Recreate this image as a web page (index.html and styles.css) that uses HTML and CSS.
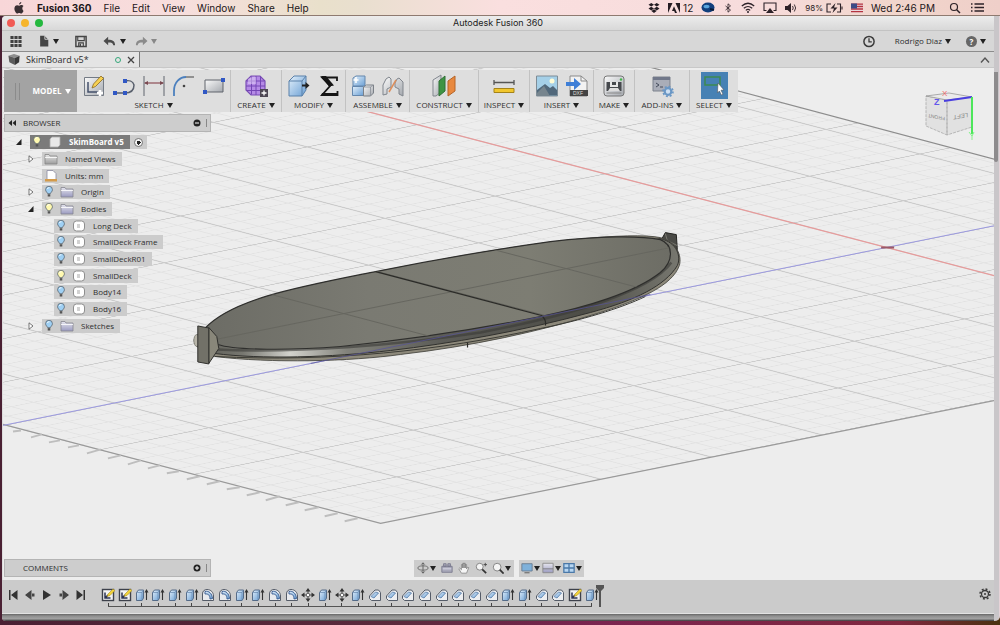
FILE: index.html
```html
<!DOCTYPE html>
<html lang="en">
<head>
<meta charset="utf-8">
<title>Autodesk Fusion 360</title>
<link rel="stylesheet" href="styles.css">
</head>
<body>
<svg class="defs" aria-hidden="true">
  <defs>
    <linearGradient id="gBlue" x1="0" y1="0" x2="1" y2="1"><stop offset="0" stop-color="#e3f0fb"/><stop offset="1" stop-color="#6a9fd4"/></linearGradient>
    <linearGradient id="gGrey" x1="0" y1="0" x2="1" y2="1"><stop offset="0" stop-color="#fafafa"/><stop offset="1" stop-color="#a4a8ae"/></linearGradient>
    <linearGradient id="gFolder" x1="0" y1="0" x2="0" y2="1"><stop offset="0" stop-color="#e6e6ee"/><stop offset="1" stop-color="#9a9ac0"/></linearGradient>
    <symbol id="t-sketch" viewBox="0 0 14 14"><rect x="1.500" y="1.500" width="11" height="11" fill="#f4f4f4" stroke="#3d414b" stroke-width="1.400"/><path d="M4 4.500V10h5.500M4 10l3-3" fill="none" stroke="#2b3354" stroke-width="1.500"/><path d="M6 8.500l1-2.500 5-5 2 1.500-5 5z" fill="#f3d43a" stroke="#927b1b" stroke-width=".5"/></symbol>
    <symbol id="t-ext" viewBox="0 0 14 14"><path d="M1.500 4.500L3.500 2h5v8L7 12.500H1.500z" fill="url(#gBlue)" stroke="#49617f" stroke-width=".9"/><path d="M1.500 4.500H7L8.500 2M7 4.500v8" fill="none" stroke="#6587ad" stroke-width=".7"/><path d="M11.500 12V3" stroke="#333" stroke-width="1.100"/><path d="M9.500 4.500l2-3.500 2 3.500z" fill="#333"/></symbol>
    <symbol id="t-fil" viewBox="0 0 14 14"><path d="M1.500 12.500V6c0-3 2-4.500 4.500-4.500 4 0 6.500 3 6.500 6.500v4.500z" fill="#e8eaee" stroke="#555c68"/><path d="M4 3.500c4-1 7 2 7.500 7L9 11C9 7 7 5.500 4 6z" fill="url(#gBlue)" stroke="#31568c" stroke-width=".9"/></symbol>
    <symbol id="t-cha" viewBox="0 0 14 14"><path d="M1.500 8L7 2h3.500l2 2.500v8h-9l-2-2z" fill="#eceef1" stroke="#555c68"/><path d="M3 8.500L7.500 4l3 1L6 10z" fill="url(#gBlue)" stroke="#567ba7" stroke-width=".8"/></symbol>
    <symbol id="t-move" viewBox="0 0 14 14"><path d="M7 0l2.500 3.500h-5zM7 14l2.500-3.500h-5zM0 7l3.500-2.500v5zM14 7l-3.500-2.500v5z" fill="#333"/><path d="M7 3v8M3 7h8" stroke="#444"/><rect x="5.700" y="5.700" width="2.600" height="2.600" fill="#fff" stroke="#444" stroke-width=".6"/></symbol>
    <symbol id="bulb" viewBox="0 0 10 14"><path d="M3.500 9C3 7.500 1 6.500 1 4.300a4 4 0 018 0C9 6.500 7 7.500 6.500 9z" fill="currentColor" stroke="#56616b" stroke-width=".9"/><path d="M3 3.500q1-2 2.500-1.500" fill="none" stroke="#fff"/><path d="M3.500 9.500h3v2.800h-3z" fill="#555"/></symbol>
    <symbol id="folder" viewBox="0 0 14 12"><path d="M1 1.500h4l1 1.500h7V11H1z" fill="url(#gFolder)" stroke="#85858f" stroke-width=".8"/><path d="M1 4.500h12" stroke="#fff" stroke-width=".8"/></symbol>
    <symbol id="body" viewBox="0 0 14 12"><rect x="1.500" y="1" width="11" height="10" rx="3" fill="#fff" stroke="#8e8e8e"/><path d="M5 4h3v4H5z" fill="#d2d2d2"/></symbol>
    <symbol id="closed" viewBox="0 0 8 8"><path d="M2 .8L6 4 2 7.200z" fill="#fff" stroke="#555" stroke-width=".8"/></symbol>
    <symbol id="open" viewBox="0 0 8 8"><path d="M6.500 1v6H1z" fill="#222"/></symbol>
  </defs>
</svg>

<header class="menubar">
  <nav class="menus" aria-label="Application menu">
    <button class="apple" aria-label="Apple"><svg viewBox="0 0 12 12"><path d="M8.300 0C8.400 1.300 7.300 2.600 6 2.600 5.900 1.300 7 .2 8.300 0zM10.500 9c-.6 1.400-1.400 2.600-2.400 2.600-.8 0-1-.5-1.900-.5s-1.200.5-1.900.5C2.900 11.600 1.400 8.900 1.400 6.600c0-2.200 1.400-3.400 2.700-3.400.9 0 1.500.5 2.200.5.600 0 1.300-.6 2.300-.6.700 0 1.400.4 1.900 1-1.700 1-1.500 3.800 0 4.900z" fill="#3a2f33"/></svg></button>
    <button class="app-name">Fusion 360</button><button>File</button><button>Edit</button><button>View</button><button>Window</button><button>Share</button><button>Help</button>
  </nav>
  <div class="status">
    <svg class="i12" viewBox="0 0 12 12"><path d="M3.300 1L6 2.800 3.200 4.600.5 2.800zM8.700 1l2.800 1.800-2.700 1.800L6 2.800zM3.200 4.800L6 6.600 3.300 8.400.5 6.600zM8.800 4.800l2.700 1.800-2.800 1.800L6 6.600zM3.400 9L6 7.300 8.600 9 6 11z" fill="#231c22"/></svg>
    <span class="pair"><svg class="i12" viewBox="0 0 12 12"><path d="M0 1h4.500L0 11zM7.500 1H12v10zM6 4.300L9 11H7L6.200 9H4z" fill="#231c22"/></svg>12</span>
    <svg class="i14" viewBox="0 0 14 12"><ellipse cx="7" cy="6" rx="6.500" ry="5" fill="#123f7d"/><ellipse cx="5.500" cy="5" rx="3" ry="1.800" fill="#5aa5dd"/><path d="M9 7.500l4 1" stroke="#061a3a" stroke-width="2"/></svg>
    <svg class="i10" viewBox="0 0 10 12"><path d="M2 3.500l6 5L5 11V1l3 2.500-6 5" fill="none" stroke="#2c2228"/></svg>
    <svg class="i14" viewBox="0 0 14 12"><path d="M.8 4.500q6.200-5.500 12.400 0M2.800 6.800q4.200-3.600 8.400 0M4.800 8.900q2.200-1.900 4.400 0" fill="none" stroke="#2c2228" stroke-width="1.200"/><circle cx="7" cy="10.600" r="1" fill="#2c2228"/></svg>
    <svg class="i14" viewBox="0 0 14 12"><path d="M3.500 9H1V1.500h12V9h-2.500" fill="none" stroke="#2c2228" stroke-width="1.100"/><path d="M7 6.500l4 5H3z" fill="#2c2228"/></svg>
    <svg class="i12" viewBox="0 0 12 12"><path d="M0 4h2.500L6 1v10L2.500 8H0z" fill="#2c2228"/><path d="M7.500 4q1.500 2 0 4M9.300 2.500q2.700 3.500 0 7" fill="none" stroke="#2c2228" stroke-width=".9"/></svg>
    <span class="pair small">98%<svg class="batt" viewBox="0 0 17 10"><path d="M5 1H1v8h4M11 1h3.500v8H11M16 3.500v3" fill="none" stroke="#2c2228" stroke-width="1.100"/><path d="M9.500 0L4.500 5.500H8L6.500 10l5-5.500H8z" fill="#2c2228"/></svg></span>
    <svg class="i12" viewBox="0 0 12 9"><path d="M0 0h12v9H0z" fill="#e9d9de"/><path d="M0 .6h12M0 3h12M0 5.500h12M0 8.200h12" stroke="#b5333f" stroke-width="1.300"/><path d="M0 0h6v5H0z" fill="#3b4b86"/></svg>
    <span>Wed 2:46 PM</span>
    <button class="search" aria-label="Search"><svg class="i12" viewBox="0 0 12 12"><circle cx="5" cy="5" r="3.500" fill="none" stroke="#2c2228" stroke-width="1.200"/><path d="M7.700 7.700L11 11" stroke="#2c2228" stroke-width="1.500"/></svg></button>
    <button aria-label="Notifications"><svg class="i14" viewBox="0 0 14 12"><path d="M0 2.500h1.500M0 6h1.500M0 9.500h1.500M3.500 2.500H13M3.500 6H13M3.500 9.500H13" stroke="#2c2228" stroke-width="1.300"/></svg></button>
  </div>
</header>

<div class="window">
  <main class="app">
    <div class="titlebar">
      <div class="lights"><i class="red"></i><i class="yellow"></i><i class="green"></i></div>
      <h1>Autodesk Fusion 360</h1>
    </div>
    <div class="quickbar">
      <div class="quick">
        <button aria-label="Data panel"><svg class="i14" viewBox="0 0 14 14"><path d="M1 1h3.400v3.400H1zM5.300 1h3.400v3.400H5.300zM9.600 1H13v3.400H9.600zM1 5.300h3.400v3.400H1zM5.300 5.300h3.400v3.400H5.300zM9.600 5.300H13v3.400H9.600zM1 9.600h3.400V13H1zM5.300 9.600h3.400V13H5.300zM9.600 9.600H13V13H9.600z" fill="#414141"/></svg></button>
        <button class="drop" aria-label="File"><svg class="i12" viewBox="0 0 12 14"><path d="M1.500 1h5l4.500 4.500v8H1.500z" fill="#444"/><path d="M7 1v4h4" fill="none" stroke="#dadada"/></svg></button>
        <button aria-label="Save"><svg class="i14" viewBox="0 0 14 14"><path d="M1.500 1.500h11v11h-11z" fill="none" stroke="#454545" stroke-width="1.600"/><path d="M3.500 2v4h7V2M4.500 12V8.500h5V12" fill="none" stroke="#454545" stroke-width="1.200"/><path d="M5.500 9.500h1.500V13H5.500z" fill="#454545"/></svg></button>
        <button class="drop" aria-label="Undo"><svg class="i14" viewBox="0 0 14 14"><path d="M5 2v3c5 0 7.500 1.500 7.500 6h-2C10 8.500 9 8 5 8v3L0 6.500z" fill="#4b4b4b"/></svg></button>
        <button class="drop faded" aria-label="Redo"><svg class="i14" viewBox="0 0 14 14"><path d="M9 2v3C4 5 1.500 6.500 1.500 11h2C4 8.500 5 8 9 8v3l5-4.500z" fill="#8b8b8b"/></svg></button>
      </div>
      <div class="account">
        <button aria-label="Job status"><svg class="i14" viewBox="0 0 14 14"><circle cx="7" cy="7" r="5.500" fill="none" stroke="#3b3b3b" stroke-width="1.600"/><path d="M7 3.500V7.500h3" fill="none" stroke="#3b3b3b" stroke-width="1.400"/></svg></button>
        <button class="drop">Rodrigo Diaz</button>
        <button class="drop help" aria-label="Help"><b>?</b></button>
      </div>
    </div>
    <div class="tabs">
      <div class="tab">
        <svg class="i14" viewBox="0 0 14 14"><path d="M1 3l6-2 6 2-5 2.500z" fill="#8d8d8d"/><path d="M1 3l7 2.500V13L2 10z" fill="#5b5b5b"/><path d="M8 5.500L13 3l-.5 7L8 13z" fill="#383838"/></svg>
        <span>SkimBoard v5*</span><i class="sync"></i>
        <button aria-label="Close tab"><svg class="i8" viewBox="0 0 8 8"><path d="M1 1l6 6M7 1L1 7" stroke="#444" stroke-width="1.300"/></svg></button>
      </div>
      <button aria-label="Collapse"><svg class="i10" viewBox="0 0 10 8"><path d="M1 6.500l4-4.500 4 4.500" fill="none" stroke="#555" stroke-width="1.400"/></svg></button>
    </div>

    <section class="viewport">
      <svg class="scene" viewBox="2 67 992 513" preserveAspectRatio="xMidYMid slice" role="img" aria-label="Skim board model">
        <defs>
          <pattern id="grid" width="100" height="100" patternUnits="userSpaceOnUse" patternTransform="matrix(.94 .246 1.104 -.2225 887 247)">
            <path d="M20 0V100M40 0V100M60 0V100M80 0V100" stroke="#e1e1e1" stroke-width="1.500"/>
            <path d="M0 20H100M0 40H100M0 60H100M0 80H100" stroke="#e3e3e3" stroke-width="1.800"/>
            <path d="M0 0V100M100 0V100" stroke="#cbcbcb" stroke-width="2"/>
            <path d="M0 0H100M0 100H100" stroke="#cbcbcb" stroke-width="2.400"/>
          </pattern>
          <linearGradient id="deck" x1="0" y1="0" x2="1" y2="0"><stop offset="0" stop-color="#6c6c65"/><stop offset=".35" stop-color="#7a7a72"/><stop offset=".7" stop-color="#7d7d73"/><stop offset="1" stop-color="#6d6d65"/></linearGradient>
          <linearGradient id="rail" x1="0" y1="0" x2="1" y2="0"><stop offset="0" stop-color="#5e5e57"/><stop offset=".08" stop-color="#777770"/><stop offset=".18" stop-color="#d2d2cc"/><stop offset=".3" stop-color="#82827b"/><stop offset=".5" stop-color="#5c5c57"/><stop offset=".8" stop-color="#4d4d47"/><stop offset="1" stop-color="#77776f"/></linearGradient>
          <clipPath id="deckClip"><path d="M204 328C232 298 300 286 375 271C430 260 500 248 550 241C600 235 640 235 660 239C673 244 674 260 660 272C635 292 585 307 540 316C470 330 400 340 340 346C290 350 235 350 217 344C206 340 201 334 204 328z"/></clipPath>
        </defs>
        <path d="M2 60H626L737 90L1000 161V399L380 523L4 425L2 424z" fill="url(#grid)"/>
        <path d="M626 60L737 90L1000 160" fill="none" stroke="#8d8d8d" stroke-width="1.200"/>
        <path d="M2 424L380 523L1000 399" fill="none" stroke="#9a9a9a" stroke-width="1.200"/>
        <path d="M12 431l8-1M30 437l11-3M48 442l11-2M67 447l11-2M86 453l14-4M107 458l13-3M127 464l13-4M147 468l12-3M166 473l12-2M186 479l13-3M206 484l13-3M226 489l13-2M246 495l13-3M265 500l14-4M285 505l13-3M304 510l14-3M324 516l13-3M344 521l13-3" stroke="#bebebe" stroke-width="2"/>
        <path d="M220 72.400L1000 276.600" fill="none" stroke="#e89b9b" stroke-width="1.200"/>
        <path d="M2 425L1000 224" stroke="#9c9ae0"/>
        <path d="M881 247h13" stroke="#9a5968" stroke-width="2"/>
        <path d="M660 241l5-9 11 2 1 15z" fill="#4a4a46" stroke="#252522"/>
        <path d="M665 233l2 7 10 5M667 240l-5 1" fill="none" stroke="#77776f"/>
        <path d="M204 328C300 275 600 225 660 237C676 241 682 255 679 265C672 285 640 299 600 312C540 331 470 346 400 354C350 361 270 363 214 356L196 346Q190 339 197 334z" fill="#8d897b" stroke="#3c3c36" stroke-width=".8"/>
        <path d="M204 328L660 238C677 242 681 256 677 265C665 285 635 300 590 312C520 331 450 343 390 350C330 357 260 359 214 353z" fill="url(#rail)" stroke="#31312e"/>
        <path d="M216 349C300 353 400 344 480 332C570 315 650 291 671 262" fill="none" stroke="#3b3b37" stroke-width="2.500" opacity=".6"/>
        <path d="M214 356C330 362 440 350 540 328C580 320 620 308 645 296" fill="none" stroke="#3b3b35"/>
        <path d="M204 328C232 298 300 286 375 271C430 260 500 248 550 241C600 235 640 235 660 239C673 244 674 260 660 272C635 292 585 307 540 316C470 330 400 340 340 346C290 350 235 350 217 344C206 340 201 334 204 328z" fill="url(#deck)" stroke="#2f2f2d" stroke-width="1.200"/>
        <g clip-path="url(#deckClip)"><path d="M200 342L690 243M270 243L560 319M390 222L680 298M210 278L430 336" fill="none" stroke="#66665f" stroke-width="1"/></g>
        <path d="M375 271L541 315q5 4 4 10M467 342v5" fill="none" stroke="#2b2b28" stroke-width="1.200"/>
        <path d="M310 363L650 294" stroke="#56539a" opacity=".7"/>
        <ellipse cx="196" cy="340" rx="3" ry="6" fill="#b8b5a9" stroke="#66665e" stroke-width=".6"/>
        <path d="M208 327L216 336 218 348 208 363z" fill="#89877a" stroke="#30302d"/>
        <path d="M197 325.500L208 327.500V363.500L197 361.500z" fill="#727168" stroke="#30302d"/>
      </svg>

      <svg class="cube" viewBox="0 0 60 60" role="img" aria-label="View cube">
        <path d="M6 14L27 18V53L6 44zM27 18L52 15V45L27 53z" fill="#e1e1e1" stroke="#aaa" stroke-width=".8" stroke-dasharray="3 1"/>
        <path d="M6 14L29 11 52 15 27 18z" fill="#ebebeb" stroke="#999" stroke-width=".8"/>
        <text class="face front" transform="matrix(-1 -.2 0 -1 25 35)">FRONT</text>
        <text class="face" transform="matrix(-1 .15 0 -1 48 31)">LEFT</text>
        <path d="M24 19L52 15" stroke="#4a3fe0" stroke-width="2"/><path d="M52 15V52" stroke="#4de65b" stroke-width="2"/>
        <path d="M49 50l3 4 2-4M52 53v5" fill="none" stroke="#83f38a"/>
        <text class="ax-z" x="14" y="23">Z</text><text class="ax-x" x="22" y="14">X</text>
      </svg>

      <div class="ribbon">
        <button class="workspace"><span class="drop-light">MODEL</span></button>
        <div class="group g-sketch">
          <div class="tools">
            <button aria-label="Create sketch"><svg viewBox="0 0 24 24"><path d="M2.500 3.500h19v18h-19z" fill="url(#gGrey)" stroke="#747b85"/><path d="M6 8v10h10" fill="none" stroke="#44506b" stroke-width="1.500"/><path d="M10 14l1.500-4L19 2l2.500 2.500-8 8z" fill="#f6d051" stroke="#8b6a20" stroke-width=".8"/><path d="M18 16v6M15 19h6" stroke="#fff" stroke-width="2.500"/></svg></button>
            <button aria-label="Line"><svg viewBox="0 0 24 24"><path d="M2 19h11M13 7c4-1 8 0 9 4 0 5-3 8-9 8" fill="none" stroke="#59606d" stroke-width="1.500"/><path d="M1 17h4v4H1zM11 5h4v4h-4zM11 17h4v4h-4z" fill="#3158c4"/></svg></button>
            <button aria-label="Sketch dimension"><svg viewBox="0 0 24 24"><path d="M2 2v20M22 2v20" stroke="#7d8188" stroke-width="1.300"/><path d="M3 9h18" stroke="#9c6a71" stroke-width="1.300"/><path d="M2 9l4-2v4zM22 9l-4-2v4z" fill="#7a4a52"/></svg></button>
            <button aria-label="Fillet"><svg viewBox="0 0 24 24"><path d="M2 22v-5C2 8 8 3 14 3" fill="none" stroke="#4c80be" stroke-width="1.800"/><path d="M14 3h8" stroke="#777" stroke-width="1.300"/><circle cx="12" cy="12" r="1.300" fill="#444"/></svg></button>
            <button aria-label="Rectangle"><svg viewBox="0 0 24 24"><path d="M3 6h18v12H3z" fill="url(#gGrey)" stroke="#60656d"/><path d="M19 4h4v4h-4zM1 16h4v4H1z" fill="#3158c4"/></svg></button>
          </div>
          <button class="label drop">SKETCH</button>
        </div>
        <div class="group g-create">
          <div class="tools"><button aria-label="Create form"><svg viewBox="0 0 24 24"><path d="M2 7l5-5h9l5 5v10l-5 4H7l-5-5z" fill="#b58be6" stroke="#7a4fb4" stroke-width="1.200"/><path d="M2 12h19M2.500 7h18M7.500 2.500v18M12 2v19M16.500 2.500v18M2.500 16.500H21" stroke="#7446b5"/><path d="M4 5q5-3 8-2v7H4z" fill="#e6d5fa" opacity=".5"/><path d="M16 15h8v8h-8z" fill="#4c4652"/><path d="M20 16.500v5M17.500 19h5" stroke="#fff" stroke-width="1.300"/></svg></button></div>
          <button class="label drop">CREATE</button>
        </div>
        <div class="group g-modify">
          <div class="tools">
            <button aria-label="Press pull"><svg viewBox="0 0 24 24"><path d="M2 7l5-5h12v14l-4 6H2z" fill="url(#gBlue)" stroke="#5b81aa"/><path d="M2 7h13l4-5M15 7v15" fill="none" stroke="#5b81aa"/><path d="M15 11.500h5" stroke="#222" stroke-width="2"/><path d="M18.500 8l4 3.500-4 3.500z" fill="#222"/></svg></button>
            <button aria-label="Change parameters"><svg viewBox="0 0 24 24"><path d="M20 7V3.500H5l8 8.500-8 9h15.500V17" fill="none" stroke="#151515" stroke-width="1.800"/><path d="M4 2h5l8 9.500-5 1z" fill="#151515"/><path d="M5 19h15v3H4z" fill="#151515"/></svg></button>
          </div>
          <button class="label drop">MODIFY</button>
        </div>
        <div class="group g-assemble">
          <div class="tools">
            <button aria-label="New component"><svg viewBox="0 0 24 24"><path d="M2 4l3-2h9v10H2z" fill="url(#gBlue)" stroke="#6487ad"/><path d="M1.500 12.500h11v9h-11z" fill="url(#gBlue)" stroke="#6487ad"/><path d="M12.500 13l3-2h7v8l-3 3h-7z" fill="url(#gGrey)" stroke="#7b8087"/><path d="M12.500 13h7l3-2M19.500 13v9" fill="none" stroke="#8b9098" stroke-width=".8"/><path d="M5 3v6M2.500 6h5" stroke="#fff" stroke-width="1.500"/></svg></button>
            <button aria-label="Joint"><svg viewBox="0 0 24 24"><path d="M2 11l3-6 3-2 2 2v8l-4 2v5l-4 1zM14 9l2-4 2-1 4 4v14l-4-2v-5l-4-2z" fill="url(#gGrey)" stroke="#81868d"/><path d="M8 18l7-12" stroke="#dc8e5c" stroke-width="1.500"/></svg></button>
          </div>
          <button class="label drop">ASSEMBLE</button>
        </div>
        <div class="group g-construct">
          <div class="tools"><button aria-label="Offset plane"><svg viewBox="0 0 24 24"><path d="M1 6l8-5v17l-5 4H1z" fill="url(#gGrey)" stroke="#81868d"/><path d="M7 7l6-5v15l-6 5z" fill="#3f9444" stroke="#2f7035"/><path d="M16 7l7-5v15l-7 5z" fill="#e8893f" stroke="#b56428"/></svg></button></div>
          <button class="label drop">CONSTRUCT</button>
        </div>
        <div class="group g-inspect">
          <div class="tools"><button aria-label="Measure"><svg viewBox="0 0 24 24"><path d="M2 6v5M22 6v5M2 8.500h20" stroke="#555" stroke-width="1.300"/><path d="M2 14.500h20v4H2z" fill="#f1c62d" stroke="#a4831a"/></svg></button></div>
          <button class="label drop">INSPECT</button>
        </div>
        <div class="group g-insert">
          <div class="tools">
            <button aria-label="Decal"><svg viewBox="0 0 24 24"><path d="M1.500 2h21v20h-21z" fill="#a5d0e8" stroke="#7e8c96"/><path d="M2 16l8-6 5 4 3-2 4 4v5.500H2z" fill="#51687b"/><path d="M2 19l7-7 6 10H2z" fill="#77858e"/><circle cx="17" cy="7" r="2.500" fill="#fffcd7"/></svg></button>
            <button aria-label="Insert DXF"><svg viewBox="0 0 24 24"><path d="M5 2h11l6 5v15H5z" fill="#f2f2f2" stroke="#8a8a8a"/><path d="M16 2v5h6" fill="none" stroke="#8a8a8a"/><path d="M5 16h18v6H5z" fill="#444"/><path d="M1 8h8V4l7 6-7 6v-4H1z" fill="#3f7fd7"/><text class="dxf" x="8" y="21">DXF</text></svg></button>
          </div>
          <button class="label drop">INSERT</button>
        </div>
        <div class="group g-make">
          <div class="tools"><button aria-label="3D print"><svg viewBox="0 0 24 24"><rect x="2" y="2" width="20" height="20" rx="3" fill="url(#gGrey)" stroke="#777"/><path d="M4.500 8h15v9h-15z" fill="#46494d"/><path d="M6 17l2-3h8l2 3z" fill="#ddd"/><path d="M8 8h2v3h4V8h2v5H8z" fill="#e6e6e6"/><path d="M4.500 19h15" stroke="#888"/><circle cx="19" cy="5.500" r="1.200" fill="#43b54b"/></svg></button></div>
          <button class="label drop">MAKE</button>
        </div>
        <div class="group g-addins">
          <div class="tools"><button aria-label="Scripts and add-ins"><svg viewBox="0 0 24 24"><path d="M3 3h17v14H3z" fill="#a9adb8" stroke="#7d828d"/><path d="M3 3h17v3H3z" fill="#71788a"/><path d="M6 9l3 2-3 2M10 13h3" fill="none" stroke="#444b5b"/><circle cx="18" cy="17.500" r="3.300" fill="#cfe0f2" stroke="#6a97c5" stroke-width="2.200"/><circle cx="18" cy="17.500" r="5" fill="none" stroke="#6a97c5" stroke-width="1.600" stroke-dasharray="2 1.900"/></svg></button></div>
          <button class="label drop">ADD-INS</button>
        </div>
        <div class="group g-select">
          <div class="tools"><button class="active" aria-label="Select"><svg viewBox="0 0 27 27"><path d="M4 5h15v8H4z" fill="none" stroke="#3d8a50" stroke-width="1.500"/><path d="M17 11l6 7-3 .2 2 4-1.700.8-1.900-4-2 2z" fill="#fff" stroke="#4e5560" stroke-width=".6"/></svg></button></div>
          <button class="label drop">SELECT</button>
        </div>
      </div>

      <div class="panel">
        <svg class="i8" viewBox="0 0 8 8"><path d="M4 1v6L.5 4zM8 1v6L4.500 4z" fill="#222"/></svg>
        <h2>BROWSER</h2>
        <button aria-label="Collapse browser"><svg class="i8" viewBox="0 0 8 8"><circle cx="4" cy="4" r="3.500" fill="#222"/><path d="M2 4h4" stroke="#fff"/></svg></button><i class="grip"></i>
      </div>
      <ul class="tree">
        <li class="root"><svg class="tw"><use href="#open"/></svg><span class="node strong"><svg class="bulb on"><use href="#bulb"/></svg><svg class="ico" viewBox="0 0 14 12"><path d="M2 3l2-2h8v8l-2 2H2z" fill="#e8e8e8" stroke="#aaa" stroke-width=".8"/></svg><span>SkimBoard v5</span></span><label class="radio"><input type="radio" checked aria-label="Activate SkimBoard v5"></label></li>
        <li class="l1"><svg class="tw"><use href="#closed"/></svg><span class="node"><svg class="ico grey"><use href="#folder"/></svg><span>Named Views</span></span></li>
        <li class="l1"><i class="tw"></i><span class="node"><svg class="ico" viewBox="0 0 14 12"><path d="M3 .5h6l3 3V10H3z" fill="#fff" stroke="#8a8aa0" stroke-width=".8"/><path d="M1 9h12v2.500H1z" fill="#d49b4a"/></svg><span>Units: mm</span></span></li>
        <li class="l1"><svg class="tw"><use href="#closed"/></svg><span class="node"><svg class="bulb"><use href="#bulb"/></svg><svg class="ico"><use href="#folder"/></svg><span>Origin</span></span></li>
        <li class="l1"><svg class="tw"><use href="#open"/></svg><span class="node"><svg class="bulb on"><use href="#bulb"/></svg><svg class="ico"><use href="#folder"/></svg><span>Bodies</span></span></li>
        <li class="l2"><span class="node"><svg class="bulb"><use href="#bulb"/></svg><svg class="ico"><use href="#body"/></svg><span>Long Deck</span></span></li>
        <li class="l2"><span class="node"><svg class="bulb"><use href="#bulb"/></svg><svg class="ico"><use href="#body"/></svg><span>SmallDeck Frame</span></span></li>
        <li class="l2"><span class="node"><svg class="bulb"><use href="#bulb"/></svg><svg class="ico"><use href="#body"/></svg><span>SmallDeckR01</span></span></li>
        <li class="l2"><span class="node"><svg class="bulb on"><use href="#bulb"/></svg><svg class="ico"><use href="#body"/></svg><span>SmallDeck</span></span></li>
        <li class="l2"><span class="node"><svg class="bulb"><use href="#bulb"/></svg><svg class="ico"><use href="#body"/></svg><span>Body14</span></span></li>
        <li class="l2"><span class="node"><svg class="bulb"><use href="#bulb"/></svg><svg class="ico"><use href="#body"/></svg><span>Body16</span></span></li>
        <li class="l1"><svg class="tw"><use href="#closed"/></svg><span class="node"><svg class="bulb"><use href="#bulb"/></svg><svg class="ico"><use href="#folder"/></svg><span>Sketches</span></span></li>
      </ul>

      <div class="dock">
        <div class="panel comments"><h2>COMMENTS</h2>
          <button aria-label="Expand comments"><svg class="i8" viewBox="0 0 8 8"><circle cx="4" cy="4" r="3.500" fill="#222"/><path d="M2 4h4M4 2v4" stroke="#fff"/></svg></button><i class="grip"></i></div>
        <div class="nav">
          <div class="navset">
            <button class="drop" aria-label="Orbit"><svg class="i12" viewBox="0 0 14 14"><path d="M7 1v12M5 3l2-2 2 2M5 11l2 2 2-2" fill="none" stroke="#555"/><ellipse cx="7" cy="7" rx="6" ry="2.500" fill="none" stroke="#666"/></svg></button>
            <button aria-label="Look at"><svg class="i12" viewBox="0 0 14 14"><path d="M1 5h12v7H1zM3 2h3v3H3zM8 2h3v3H8z" fill="#a9a9ba" stroke="#77778b"/><path d="M2 8h10" stroke="#e1e1ec"/></svg></button>
            <button aria-label="Pan"><svg class="i12" viewBox="0 0 14 14"><path d="M4 13L1 8l1-1 2 2V3h1.500v4V1.500H7V7 1.500h1.500V7 3H10v5l1-2 1.500.5L10 13z" fill="#f5f5f5" stroke="#666" stroke-width=".7"/></svg></button>
            <button aria-label="Zoom"><svg class="i12" viewBox="0 0 14 14"><circle cx="5.500" cy="5.500" r="4" fill="#f5f5f5" stroke="#777"/><path d="M8.500 8.500L13 13" stroke="#333" stroke-width="2"/><path d="M12 1v4M10 3h4" stroke="#444"/></svg></button>
            <button class="drop" aria-label="Fit"><svg class="i12" viewBox="0 0 14 14"><circle cx="6" cy="6" r="4.500" fill="#f5f5f5" stroke="#777"/><path d="M9 9l4.500 4.500" stroke="#333" stroke-width="2"/></svg></button>
          </div>
          <div class="navset">
            <button class="drop" aria-label="Display settings"><svg class="i12" viewBox="0 0 14 14"><path d="M1 2h12v8.500H1z" fill="#7fb1da" stroke="#66798c"/><path d="M4 12.500h6" stroke="#777" stroke-width="1.500"/></svg></button>
            <button class="drop" aria-label="Grid and snaps"><svg class="i12" viewBox="0 0 14 14"><path d="M1 1.500h12v11H1z" fill="url(#gFolder)" stroke="#888"/><path d="M1 8h12" stroke="#777"/></svg></button>
            <button class="drop" aria-label="Viewports"><svg class="i12" viewBox="0 0 14 14"><path d="M1 2h12v10H1z" fill="#b7d6f2" stroke="#4a78a8" stroke-width="1.500"/><path d="M7 2v10M1 7h12" stroke="#4a78a8" stroke-width="1.500"/></svg></button>
          </div>
        </div>
      </div>
    </section>

    <footer class="timeline">
      <div class="play">
        <button aria-label="Go to start"><svg class="i10" viewBox="0 0 10 10"><path d="M1 0h1.500v10H1zM9.500 0v10L3 5z" fill="#333"/></svg></button>
        <button aria-label="Step back"><svg class="i10" viewBox="0 0 10 10"><path d="M6.500 0v10L0 5zM7 3.500h2.500v3H7z" fill="#444"/></svg></button>
        <button aria-label="Play"><svg class="i10" viewBox="0 0 10 10"><path d="M1 0v10l8-5z" fill="#333"/></svg></button>
        <button aria-label="Step forward"><svg class="i10" viewBox="0 0 10 10"><path d="M3.500 0v10L10 5zM.5 3.500H3v3H.5z" fill="#444"/></svg></button>
        <button aria-label="Go to end"><svg class="i10" viewBox="0 0 10 10"><path d="M7.500 0H9v10H7.500zM.5 0v10L7 5z" fill="#333"/></svg></button>
      </div>
      <div class="track" id="track"></div>
      <svg class="marker" viewBox="0 0 10 24"><path d="M1 1h8v3L6 7v16H4V7L1 4z" fill="#555"/></svg>
      <button class="settings" aria-label="Timeline settings"><svg class="i12" viewBox="0 0 12 12"><circle cx="6" cy="6" r="3.500" fill="none" stroke="#3a3a3a" stroke-width="1.300"/><circle cx="6" cy="6" r="5" fill="none" stroke="#3a3a3a" stroke-width="1.500" stroke-dasharray="1.960 1.960"/><circle cx="6" cy="6" r="1" fill="#3a3a3a"/></svg></button>
    </footer>
    <div class="edge"></div>
  </main>
  <div class="gutter"><i></i></div>
</div>
<script src="timeline.js"></script>
</body>
</html>
```

FILE: styles.css
```css
* { box-sizing: border-box; }
html, body { height: 100%; margin: 0; }
body {
  display: flex;
  flex-direction: column;
  overflow: hidden;
  padding-bottom: 4px;
  background: linear-gradient(90deg, #4a2033, #5b2a3c 40%, #7b2450 60%, #80283f 90%, #4a3210);
  font-family: "Open Sans", "Noto Sans", sans-serif;
  font-size: 8px;
  line-height: 12px;
  color: #2e2e2e;
}
button {
  display: inline-flex;
  align-items: center;
  justify-content: center;
  border: 0;
  padding: 0;
  margin: 0;
  background: none;
  font: inherit;
  color: inherit;
}
svg { display: block; flex: none; }
h1, h2, ul { margin: 0; padding: 0; font: inherit; }
.defs { position: absolute; width: 0; height: 0; }
.i8 { width: 8px; height: 8px; }
.i10 { width: 10px; height: 10px; }
.i12 { width: 12px; height: 12px; }
.i14 { width: 14px; height: 13px; }
.drop::after {
  content: "";
  margin-left: 3px;
  border: 3px solid transparent;
  border-top: 5px solid #222;
  border-bottom: 0;
}

/* system menu bar */
.menubar {
  display: flex;
  flex: none;
  align-items: center;
  justify-content: space-between;
  height: 16px;
  padding: 0 15px 0 13px;
  background: linear-gradient(90deg, #f8d6d8, #f7dedd 18%, #e9e0cb 32%, #e9dfcf 36%, #fadfdf 50%, #f7dcdc 75%, #f1d5cb 90%, #efcfc9);
  border-bottom: 1px solid #8e7a70;
  font-family: Inter, "Open Sans", sans-serif;
  font-size: 10px;
  color: #1d171a;
}
.menus { display: flex; gap: 12px; }
.apple svg { width: 12px; height: 12px; }
.app-name { font-weight: 700; }
.status { display: flex; align-items: center; gap: 8px; }
.pair { display: flex; align-items: center; gap: 3px; }
.small { font-size: 8px; }
.batt { width: 17px; height: 10px; }
.search { margin: 0 2px 0 6px; }

/* window frame */
.window { display: flex; flex: 1; min-height: 0; margin-left: 2px; }
.app { display: flex; flex: 1; flex-direction: column; min-width: 0; background: #d7d7d7; border-radius: 4px 0 0 4px; overflow: hidden; }
.gutter { display: flex; flex: none; flex-direction: column; width: 6px; padding: 56px 1px 0 0; background: #c9c6c9; border-right: 1px solid #e6d3d8; border-radius: 0 0 5px 0; }
.gutter i { height: 90px; background: #8d8b8d; border-radius: 0 0 3px 3px; }
.titlebar { display: grid; grid-template-columns: 1fr auto 1fr; align-items: center; height: 15px; background: linear-gradient(#ececec, #d8d8d8); border-bottom: 1px solid #c3c3c3; }
.titlebar h1 { font-family: Inter, sans-serif; font-size: 9px; color: #222; }
.lights { display: flex; gap: 6px; padding-left: 5px; }
.lights i { width: 8px; height: 8px; border-radius: 50%; }
.red { background: #f15b55; }
.yellow { background: #f6b52c; }
.green { background: #25b83f; }
.quickbar { display: flex; justify-content: space-between; height: 21px; padding: 0 8px 0 7px; border-bottom: 1px solid #8c8c8c; }
.quick, .account { display: flex; align-items: center; }
.quick { gap: 15px; }
.quick .faded { margin-left: -7px; }
.faded::after { border-top-color: #888; }
.account { gap: 19px; }
.account .help { margin-left: -4px; }
.help b { width: 11px; height: 11px; border-radius: 50%; background: #666; color: #fff; line-height: 11px; }
.tabs { display: flex; align-items: center; justify-content: space-between; height: 16px; padding-right: 4px; border-bottom: 1px solid #c8c8c8; }
.tab { display: flex; align-items: center; height: 15px; padding: 0 4px 0 5px; gap: 5px; background: #e4e4e4; border-right: 1px solid #777; font-size: 9px; }
.tab span { width: 84px; }
.sync { width: 6px; height: 6px; margin-right: 1px; border: 1px solid #35a77a; border-radius: 50%; }

/* 3D canvas and what floats on it */
.viewport { position: relative; display: flex; flex: 1; flex-direction: column; align-items: flex-start; min-height: 0; padding: 2px 1px 3px; background: #ededed; border-left: 1px solid #ddd; }
.scene { position: absolute; inset: 0; width: 100%; height: 100%; }
.cube { position: absolute; top: 14px; right: 14px; width: 60px; height: 60px; }
.face { font: 6px "Liberation Sans", sans-serif; fill: #858585; }
.front { font-size: 5px; }
.ax-z { font: 700 9px "Liberation Sans", sans-serif; fill: #6257ec; }
.ax-x { font: 8px "Liberation Sans", sans-serif; fill: #f06a6a; }
.dxf { font: 5px "Liberation Sans", sans-serif; fill: #dddddd; }
.viewport > :not(.scene):not(.cube) { position: relative; }

.ribbon { display: flex; height: 42px; background: #dedede; }
.workspace { width: 73px; padding: 0 0 0 5px; background: #a3a3a3; color: #fff; font-weight: 700; }
.workspace::before { content: ""; width: 3px; height: 17px; margin-right: 13px; border: 1px solid #8b8b8b; border-width: 0 1px; }
.drop-light { display: flex; align-items: center; }
.drop-light::after { content: ""; margin-left: 4px; border: 3px solid transparent; border-top: 5px solid #fff; border-bottom: 0; }
.group { display: flex; flex-direction: column; align-items: center; justify-content: space-between; padding: 2px 0 1px; border-right: 1px solid #c2c2c2; }
.group:last-child { border: 0; }
.tools { display: flex; align-items: center; gap: 6px; height: 27px; }
.tools svg { width: 24px; height: 24px; }
.g-sketch { width: 154px; }
.g-create { width: 51px; }
.g-modify { width: 64px; }
.g-assemble { width: 64px; }
.g-construct { width: 69px; }
.g-inspect { width: 51px; }
.g-insert { width: 64px; }
.g-make { width: 41px; }
.g-addins { width: 55px; }
.g-select { width: 48px; }
.tools .active svg { width: 27px; height: 27px; background: #4681b4; }

.panel { display: flex; align-items: center; width: 207px; height: 18px; padding: 0 3px; background: #cdcdcd; border: 1px solid #b4b4b4; }
.viewport > .panel { margin-top: 2px; }
.panel h2 { flex: 1; margin-left: 7px; }
.comments h2 { margin-left: 15px; }
.grip { width: 2px; height: 8px; margin-left: 4px; border-right: 1px solid #888; }

.tree { display: grid; grid-auto-rows: 1fr; height: 200px; margin-top: 2px; list-style: none; }
.tree li { display: flex; align-items: center; }
.root { padding-left: 11px; }
.l1 { padding-left: 23px; }
.l2 { padding-left: 50px; }
.tw { width: 8px; height: 8px; margin-right: 7px; }
.root .tw, .l1 .tw { flex: none; }
.node { display: flex; align-items: center; height: 14px; padding: 0 6px 0 2px; background: #cccccc; }
.node > span { margin-left: 6px; }
.bulb { width: 10px; height: 12px; margin-right: 6px; color: #9fd0f4; }
.bulb.on { color: #fff9b0; }
.ico { width: 14px; height: 12px; }
.node .ico { margin-right: 1px; }
.grey { filter: grayscale(1); }
.strong { background: #7b7b7b; color: #fff; font-weight: 700; }
.radio { display: flex; align-items: center; height: 14px; padding: 0 4px; background: #cccccc; }
.radio input { appearance: none; width: 9px; height: 9px; margin: 0; border: 1px solid #777; border-radius: 50%; background: radial-gradient(circle, #222 2px, #f5f5f5 2px); }

.dock { display: grid; grid-template-columns: 1fr auto 1fr; align-items: center; width: 100%; margin-top: auto; }
.nav { display: flex; gap: 5px; }
.navset { display: flex; align-items: center; gap: 2px; height: 17px; padding: 0 2px; background: #cccccc; }
.navset .drop::after { margin-left: 1px; }
.navset:first-child { gap: 5px; padding: 0 3px; }

/* timeline */
.timeline { display: flex; align-items: flex-start; flex: none; height: 34px; padding: 4px 3px 0 6px; background: #cbcbcb; border-bottom: 1px solid #e2e2e2; }
.play { display: flex; align-items: center; gap: 7px; height: 21px; width: 92px; }
.track { display: flex; width: 500px; height: 23px; background: linear-gradient(#555, #555) center bottom / calc(100% - 16px) 1px no-repeat; }
.track button { flex: 1; flex-direction: column; justify-content: flex-start; padding: 4px 0 1px; }
.track button::after { content: ""; width: 1px; height: 3px; margin-top: auto; background: #444; }
.track svg { width: 14px; height: 14px; }
.marker { width: 10px; height: 24px; margin-left: -5px; }
.settings { height: 20px; margin-left: auto; }
.edge { flex: none; height: 7px; background: linear-gradient(#666, #8f8f8f 30%, #a2a2a2 70%, #333); }
```

FILE: timeline.js
```js
const runs = [["sketch", 2], ["ext", 4], ["fil", 2], ["ext", 2], ["fil", 2], ["move", 1], ["ext", 1], ["move", 1], ["ext", 1], ["cha", 8], ["ext", 2], ["cha", 2], ["sketch", 1], ["ext", 1]];
const names = { sketch: "Sketch", ext: "Extrude", fil: "Fillet", cha: "Chamfer", move: "Move" };
document.getElementById("track").innerHTML = runs
  .flatMap(([kind, count]) => Array(count).fill(kind))
  .map((kind) => `<button aria-label="${names[kind]}"><svg><use href="#t-${kind}"/></svg></button>`)
  .join("");
```
